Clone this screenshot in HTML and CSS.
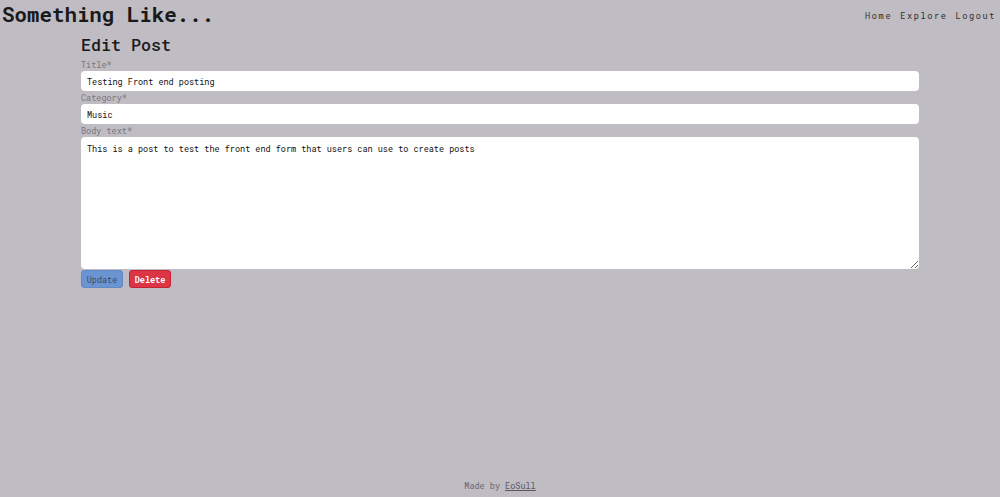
FILE: index.html
```html
<!DOCTYPE html>
<html lang="en">
<head>
<meta charset="utf-8">
<title>Edit Post</title>
<link rel="stylesheet" href="styles.css">
</head>
<body>
<header class="site-header">
  <h1 class="brand">Something Like...</h1>
  <nav class="nav">
    <a href="#">Home</a>
    <a href="#">Explore</a>
    <a href="#">Logout</a>
  </nav>
</header>
<main class="content">
  <h2 class="page-title">Edit Post</h2>
  <form class="post-form">
    <label class="field-label" for="title">Title*</label>
    <input class="field-input" id="title" type="text" value="Testing Front end posting">
    <label class="field-label" for="category">Category*</label>
    <input class="field-input" id="category" type="text" value="Music">
    <label class="field-label" for="body">Body text*</label>
    <textarea class="field-textarea" id="body">This is a post to test the front end form that users can use to create posts</textarea>
    <div class="actions">
      <button type="button" class="btn btn-update">Update</button>
      <button type="button" class="btn btn-delete">Delete</button>
    </div>
  </form>
</main>
<footer class="site-footer">Made by <a href="#">EoSull</a></footer>
</body>
</html>
```
FILE: styles.css
```css
* { box-sizing: border-box; }
html, body { height: 100%; }
body {
  margin: 0;
  background: #bfbcc3;
  font-family: "Roboto Mono", "DejaVu Sans Mono", "Liberation Mono", monospace;
  color: #1c1c1c;
  display: flex;
  flex-direction: column;
  min-height: 100vh;
}
.site-header {
  display: flex;
  justify-content: space-between;
  align-items: flex-start;
  padding: 0 4px 0 2px;
}
.brand {
  margin: 0;
  font-size: 20.8px;
  line-height: 28px;
  font-weight: 700;
  color: #1a1a1a;
}
.nav {
  display: flex;
  gap: 8px;
  padding-top: 10px;
}
.nav a {
  color: #2e2e2e;
  text-decoration: none;
  font-size: 8.6px;
  letter-spacing: 1.6px;
  line-height: 12px;
}
.content {
  width: 838px;
  margin: 0 auto;
  flex: 1;
}
.page-title {
  margin: 7px 0 0;
  font-size: 16.7px;
  line-height: 20px;
  font-weight: 500;
  color: #1a1a1a;
}
.post-form { display: flex; flex-direction: column; padding-top: 3px; }
.field-label {
  display: block;
  font-size: 8.5px;
  line-height: 13px;
  color: #7a777e;
}
.field-input,
.field-textarea {
  display: block;
  width: 100%;
  border: none;
  border-radius: 4px;
  background: #ffffff;
  font-family: inherit;
  font-size: 8.5px;
  color: #111;
  padding: 0 6px;
}
.field-input { height: 20px; }
.field-textarea {
  height: 132px;
  padding-top: 6px;
  resize: vertical;
}
.actions {
  display: flex;
  gap: 6px;
  margin-top: 1px;
}
.btn {
  height: 18px;
  width: 42px;
  border-radius: 3px;
  font-family: inherit;
  font-size: 8.5px;
  padding: 0;
  cursor: pointer;
}
.btn-update {
  background: #6b94d3;
  border: 1px solid #6189c6;
  color: #3d4a63;
}
.btn-delete {
  background: #dc3545;
  border: 1px solid #c52232;
  color: #ffffff;
  font-weight: 700;
}
.site-footer {
  text-align: center;
  font-size: 8.5px;
  line-height: 12px;
  color: #6b686e;
  padding-bottom: 5px;
}
.site-footer a { color: #5a575d; text-decoration: underline; }
```
